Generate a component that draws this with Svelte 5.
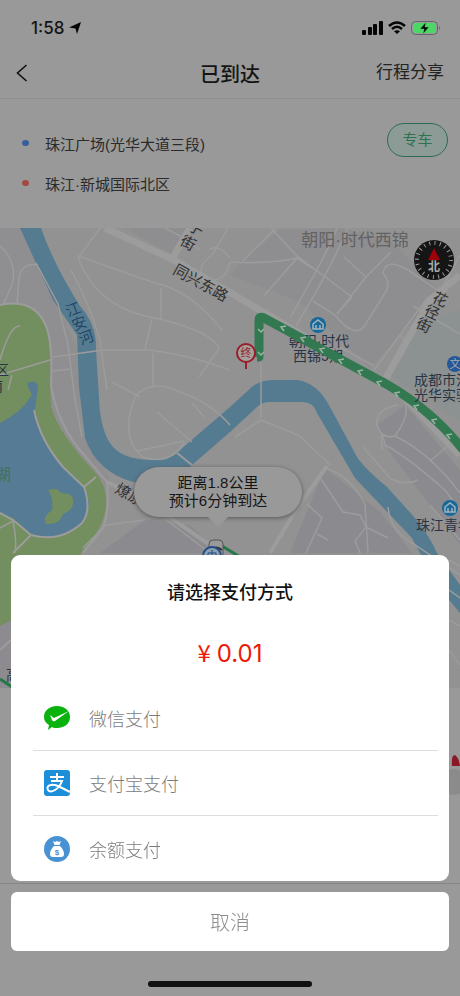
<script>
  const trip = {
    from: "珠江广场(光华大道三段)",
    to: "珠江·新城国际北区",
    type: "专车",
  };

  const methods = [
    { id: "wechat", name: "微信支付" },
    { id: "alipay", name: "支付宝支付" },
    { id: "balance", name: "余额支付" },
  ];

  const roads = [
    "M0 246Q18 262 12 285L3 305",
    "M38 265Q22 262 19 278L17 303M36 263L58 304L68 345L75 400L82 437",
    "M71 270Q88 300 100 340L107 390",
    "M100 228L78 258Q98 310 160 319Q215 333 219 349L199 377",
    "M78 256L155 283Q190 290 222 330",
    "M161 288V319M152 319L145 349M153 353V387M53 357L103 350L150 350Q190 355 230 370",
    "M53 371L70 369M112 382L140 397M157 412L192 442",
    "M185 442Q170 466 143 457Q119 439 135 397Q150 378 180 392Q210 402 230 425M192 403L204 417M137 451L184 441",
    "M165 228L180 236L200 250M228 228L212 255Q194 268 206 278Q225 285 230 262M209 250Q218 243 230 258",
    "M230 262Q273 264 297 258L264 296M243 261L276 228M271 228L297 256L352 297L337 314M297 258L320 273",
    "M337 228Q330 248 290 318M348 228Q330 270 296 326M344 257L366 277L337 314M391 252L366 277",
    "M313 301L335 315Q355 340 365 325L385 293Q392 284 383 273Q386 257 408 270L440 292L460 255M428 297L374 370",
    "M413 306L460 334M400 335L405 340M340 347L374 366",
    "M261 361V418M261 420L235 437M261 420L300 436L330 465",
    "M377 425Q375 409 398 405M377 425Q382 440 395 436Q410 415 405 405M395 436Q430 453 460 493M430 461L455 440M382 450Q380 420 385 445Q405 455 445 490L460 510M363 447L391 479Q406 486 418 480",
    "M325 468Q350 475 365 504L368 553M321 479L343 512L360 515L366 527L355 541L360 553M307 504L322 518L306 553M317 534L328 540",
    "M366 527L388 538M388 507Q390 530 412 543L460 575M430 505L460 540",
    "M83 548L106 525L145 520M160 515L210 553",
    "M0 528L13 521Q17 540 15 553M0 360Q10 325 20 326M0 375L50 360M12 375L8 390",
    "M449 560L460 566M449 590L460 598M449 620L460 626M449 650L460 665",
  ];

  let selected = $state("");
  let open = $state(true);
</script>

<div class="page">
  <div class="status">
    <div class="time">
      <span>1:58</span>
      <svg width="12" height="12" viewBox="0 0 12 12"><path d="M12 0L8 12L6.500 6.500L0 5.500z" /></svg>
    </div>
    <div class="signals">
      <svg width="21" height="14" viewBox="0 0 21 14">
        <rect x="0" y="9" width="4" height="5" rx="1" />
        <rect x="6" y="6" width="4" height="8" rx="1" />
        <rect x="11" y="3" width="4" height="11" rx="1" />
        <rect x="17" y="0" width="4" height="14" rx="1" />
      </svg>
      <svg width="18" height="14" viewBox="0 0 18 14" fill="none" stroke="#050505" stroke-width="2.500">
        <path d="M1 5Q9 -2 17 5M4 8Q9 3.500 14 8" />
        <path d="M9 13L6 10.300Q9 8.300 12 10.300z" fill="#050505" stroke="none" />
      </svg>
      <svg width="30" height="14" viewBox="0 0 30 14">
        <rect x="0.500" y="0.500" width="26" height="13" rx="4" fill="none" stroke="#666" />
        <rect x="2" y="2" width="23" height="10" rx="2.500" fill="#4bd765" />
        <path d="M28 5Q30 7 28 9z" fill="#666" />
        <path d="M15 1L9 8H13L12 13L18 6H14z" stroke="#4bd765" stroke-width=".5" />
      </svg>
    </div>
  </div>

  <header>
    <button class="back" aria-label="返回">
      <svg width="12" height="18" viewBox="0 0 12 18" fill="none" stroke="#111" stroke-width="1.600">
        <path d="M10.500 1L1.500 9L10.500 17" />
      </svg>
    </button>
    <h1>已到达</h1>
    <a href="#share">行程分享</a>
  </header>

  <section class="trip">
    <ul>
      <li><i class="dot blue"></i>{trip.from}</li>
      <li><i class="dot red"></i>{trip.to}</li>
    </ul>
    <span class="tag">{trip.type}</span>
  </section>

  <div class="map">
    <svg class="canvas" viewBox="0 228 460 460" preserveAspectRatio="xMidYMid slice">
      <rect x="-200" y="228" width="900" height="460" fill="#929293" />
      <path d="M0 228H20L58 304L77 350L82 430L110 480L100 495L50 407L50 345L30 308L0 304z" fill="#8f8e91" />
      <path d="M125 228L176 256L200 228zM230 275L300 302L330 330L370 368L440 292L390 240L340 228L280 230L240 262z" fill="#8e8d90" />
      <path d="M377 425L405 405L460 470V545L388 450zM325 468L290 553H412L380 512zM100 553L145 520L190 525L220 553z" fill="#8b8a8f" />
      <path d="M410 330L460 310V420L385 372z" fill="#8c9191" />

      <!-- park and lake -->
      <path d="M0 305Q33 298 45 325Q51 340 50 381L51 407Q60 435 93 470Q106 484 106 500Q108 523 83 550L40 626H0z" fill="#738e5f" />
      <path d="M0 423Q22 412 32 395L27 384Q34 378 38 386L35 410Q41 443 63 467Q88 485 89 503Q86 531 60 535Q40 539 30 533L13 518L0 513z" fill="#557b95" />
      <path d="M48 490Q58 487 61 493Q74 493 73 502Q74 510 63 514Q60 525 46 524Q42 517 52 510Q54 499 48 490z" fill="#738e5f" />
      <path d="M0 626L40 605V688H0z" fill="#8d8b90" />

      <!-- river -->
      <path d="M20 228H41Q53 263 80 306Q97 325 96 350L99 398Q100 428 110 443Q120 459 150 460Q172 459 180 450L230 407L253 386Q261 380 275 380H297Q318 383 330 407L357 457Q365 469 387 487L415 518Q430 537 437 553L460 585V613L445 595L420 553L412 538L355 478L317 413Q313 402 303 402H270Q262 402 257 407L230 432L192 465Q170 492 133 482Q97 472 85 438L79 387L77 335L53 300z" fill="#557b91" />

      <g class="roads">
        {#each roads as d}
          <path {d} />
        {/each}
      </g>
      <g class="wide">
        <path d="M105 228L172 259L260 310L400 393L460 455" />
        <path d="M172 259L190 228M460 275L430 300L386 378" />
        <path d="M0 305Q38 297 48 332Q53 350 51 385Q57 425 85 456L107 482Q110 510 103 528L83 553" class="thin" />
        <path d="M34 410Q40 440 63 467L84 487Q92 510 82 523Q60 543 31 535L13 520L0 513M31 535L13 553M84 487L96 477M177 453L192 465" class="thin" />
        <path d="M107 482L145 500L210 545M327 466L296 510L270 553" class="medium" />
        <path d="M0 650L11 640" class="thin" />
      </g>

      <text class="place" x="355" y="246" font-size="17" text-anchor="middle" fill="#626262">朝阳·时代西锦</text>
      <text class="label" x="319" y="346" text-anchor="middle">朝阳·时代</text>
      <text class="label" x="318" y="361" text-anchor="middle">西锦5期</text>

      <!-- route -->
      <path d="M257 357H259V320Q259 316 264 318L375 378Q428 405 465 452" class="route" />
      <path d="M258 329L261 332L264 329M258 352L261 355L264 352M286 326L281 327L284 331M306 337L301 338L304 342M325 348L320 349L323 353M344 359L339 360L342 364M363 370L358 371L361 375M382 381L377 382L380 386M400 392L395 393L398 397M419 405L414 406L417 410M437 419L432 420L435 424M452 434L447 435L450 439" class="arrows" />
      <path d="M0 679L15 689M222 546L245 560" stroke="#257848" stroke-width="3" />

      <text class="road-name" transform="translate(172 273) rotate(29)">同兴东路</text>
      <text class="road-name" transform="translate(179 244) rotate(29)">街</text>
      <text class="road-name" transform="translate(187 229) rotate(29)">子</text>
      <text class="road-name" transform="translate(114 492) rotate(29)">燎原路</text>
      <g class="river-name">
        <text transform="translate(68 317) rotate(-20)">江</text>
        <text transform="translate(74 331) rotate(-20)">安</text>
        <text transform="translate(81 345) rotate(-20)">河</text>
      </g>
      <g class="road-name">
        <text transform="translate(431 301) rotate(25)">花</text>
        <text transform="translate(423 314) rotate(25)">径</text>
        <text transform="translate(415 327) rotate(25)">街</text>
      </g>
      <text class="label" x="414" y="385">成都市江</text>
      <text class="label" x="414" y="400">光华实验</text>
      <text class="label" x="416" y="530">珠江青年</text>
      <text class="label" x="-5" y="375">区</text>
      <text class="label" x="-11" y="391">南</text>
      <text x="-5" y="480" font-size="16" fill="#467052">湖</text>
      <text class="label" x="6" y="680">高</text>

      <g class="poi">
        <circle cx="318" cy="325" r="8" />
        <path d="M313 324L318 320L323 324V329H313z" />
        <path d="M316 329V325M320 329V325" />
        <circle cx="450" cy="508" r="8" />
        <path d="M445 507L450 503L455 507V512H445z" />
        <path d="M448 512V508M452 512V508" />
        <circle cx="455" cy="364" r="8" class="school" />
        <text x="455" y="368" font-size="11" text-anchor="middle">文</text>
      </g>

      <path d="M246 361V369" stroke="#981e29" stroke-width="2" />
      <circle cx="246" cy="353" r="9" fill="#a5a0a0" stroke="#981e29" stroke-width="2" />
      <text x="246" y="357" font-size="11" text-anchor="middle" fill="#981e29">终</text>

      <!-- compass -->
      <g>
        <circle cx="434" cy="260" r="20" fill="#151515" />
        <circle cx="434" cy="260" r="17" fill="none" stroke="#999" stroke-width="4" stroke-dasharray="1 4.340" />
        <path d="M434 248L440 260H428z" fill="#a00008" />
        <text x="434" y="271" font-size="12" font-weight="700" text-anchor="middle" fill="#aaa">北</text>
      </g>

      <!-- car -->
      <rect x="209" y="540" width="14" height="26" rx="4" fill="#999" stroke="#555" />
      <path d="M211 550Q216 545 222 550" fill="none" stroke="#333" stroke-width="2" />
      <circle cx="212" cy="556" r="9" fill="#8a9eae" stroke="#1c4b86" stroke-width="2" />
      <path d="M208 553H216V556H208zM212 550V560" fill="none" stroke="#1c4b86" />
    </svg>
    <div class="bubble">
      <p>距离1.8公里</p>
      <p>预计6分钟到达</p>
    </div>
  </div>

  <section class="driver">
    <svg width="24" height="48" viewBox="0 0 24 48">
      <path d="M12 16Q11 5 15 5Q19 8 20 16z" fill="#8b1826" />
      <circle cx="14" cy="32" r="13" fill="#8b8b8b" />
    </svg>
  </section>

  {#if open}
    <div class="sheet">
      <div class="panel" role="dialog" aria-labelledby="pay-title">
        <h2 id="pay-title">请选择支付方式</h2>
        <p class="price"><span class="yen">¥</span>0.01</p>
        <div class="methods">
          {#each methods as method}
            <button class="method" class:selected={selected === method.id} onclick={() => (selected = method.id)}>
              <svg width="28" height="28" viewBox="0 0 28 28">
                {#if method.id === "wechat"}
                  <path d="M14 2C21 2 27 6 27 13C27 20 21 24 14 24C12 24 10 24 9 23L5 26L6 21C3 19 1 17 1 13C1 6 7 2 14 2z" fill="#09b20c" />
                  <path d="M7 11L11 14L26 7L12 17Q10 18 9 16z" fill="#fff" />
                {:else if method.id === "alipay"}
                  <rect x="1" y="1" width="26" height="26" rx="3" fill="#1d8fd8" />
                  <g fill="none" stroke="#fff" stroke-width="2">
                    <path d="M7 8H21M14 4V12M8 12H19Q17 18 12 21Q7 24 5 21Q3 17 8 16Q11 15 17 18L27 23" />
                  </g>
                {:else}
                  <circle cx="14" cy="14" r="13" fill="#4892d4" />
                  <path d="M10 6L12 7L14 6L16 7L18 6L16.500 10H11.500zM11 11H17Q21 15 21 19Q21 22 18 22H10Q7 22 7 19Q7 15 11 11z" fill="#fff" />
                  <text x="14" y="20" font-size="8" font-weight="700" text-anchor="middle" fill="#4892d4">$</text>
                {/if}
              </svg>
              <span>{method.name}</span>
            </button>
          {/each}
        </div>
      </div>
      <button class="cancel" onclick={() => (open = false)}>取消</button>
      <div class="home"></div>
    </div>
  {/if}
</div>

<style>
  :global(body) {
    margin: 0;
    background: #999;
  }

  .page {
    display: flex;
    flex-direction: column;
    min-height: 100vh;
    overflow: hidden;
    color: #151515;
    background: #999;
    font-family: "Liberation Sans", "Noto Sans CJK SC", sans-serif;
  }

  h1,
  h2,
  p,
  ul {
    margin: 0;
    padding: 0;
  }

  button {
    padding: 0;
    border: 0;
    background: none;
    font-family: inherit;
    cursor: pointer;
  }

  .status {
    display: flex;
    align-items: center;
    justify-content: space-between;
    height: 56px;
    padding: 0 19px 0 31px;
    fill: #050505;
  }

  .time,
  .signals {
    display: flex;
    align-items: center;
    gap: 5px;
  }

  .time {
    font-family: Inter, sans-serif;
    font-size: 17px;
    font-weight: 500;
  }

  header {
    display: grid;
    grid-template-columns: 1fr auto 1fr;
    align-items: center;
    height: 42px;
    padding: 0 16px;
    border-bottom: 1px solid #8f8f8f;
  }

  .back {
    display: flex;
    width: 24px;
    height: 24px;
    padding-bottom: 8px;
    align-items: center;
  }

  h1 {
    padding-bottom: 4px;
    font-size: 20px;
    font-weight: 500;
    line-height: 30px;
  }

  header a {
    justify-self: end;
    padding-bottom: 8px;
    color: #222;
    font-size: 17px;
    line-height: 24px;
    text-decoration: none;
  }

  .trip {
    display: flex;
    align-items: flex-start;
    justify-content: space-between;
    height: 105px;
    padding: 24px 12px 0 22px;
  }

  .trip ul {
    list-style: none;
  }

  .trip li {
    display: flex;
    align-items: center;
    gap: 16px;
    height: 40px;
    color: #2b2b2b;
    font-size: 15px;
  }

  .dot {
    width: 7px;
    height: 6px;
    border-radius: 50%;
  }

  .blue {
    background: #365f9d;
  }

  .red {
    background: #a54843;
  }

  .tag {
    box-sizing: border-box;
    width: 61px;
    height: 34px;
    border: 1px solid #2d6c50;
    border-radius: 17px;
    color: #2d7353;
    background: #8c9b95;
    font-size: 15px;
    line-height: 32px;
    text-align: center;
  }

  .map {
    position: relative;
    height: 460px;
  }

  .canvas {
    display: block;
    width: 100%;
    height: 100%;
  }

  .roads {
    fill: none;
    stroke: #9c9c9c;
    stroke-width: 1.5;
  }

  .wide {
    fill: none;
    stroke: #9c9c9c;
    stroke-width: 7;
  }

  .thin {
    stroke-width: 2;
  }

  .medium {
    stroke-width: 4;
  }

  .route {
    fill: none;
    stroke: #327951;
    stroke-width: 9;
    stroke-linejoin: round;
  }

  .arrows {
    fill: none;
    stroke: #9cb3a2;
    stroke-width: 1.5;
  }

  .label {
    fill: #2a3443;
    font-size: 14px;
  }

  .road-name {
    fill: #303030;
    font-size: 15px;
  }

  .river-name {
    fill: #234766;
    font-size: 15px;
  }

  .poi {
    fill: #17699a;
  }

  .poi path {
    fill: none;
    stroke: #a5b4bc;
    stroke-width: 1.5;
  }

  .poi .school {
    fill: #24589a;
  }

  .poi text {
    fill: #aaa;
  }

  .bubble {
    position: absolute;
    top: 239px;
    left: 50%;
    box-sizing: border-box;
    width: 168px;
    height: 50px;
    margin-left: -96px;
    padding-top: 7px;
    border-radius: 25px;
    background: #999;
    box-shadow: 0 1px 4px #555;
    font-size: 15px;
    line-height: 18px;
    text-align: center;
  }

  .bubble::after {
    position: absolute;
    top: 49px;
    left: 73px;
    border: 11px solid transparent;
    border-top-color: #999;
    border-bottom: 0;
    content: "";
  }

  .driver {
    display: flex;
    align-items: flex-start;
    justify-content: flex-end;
    box-sizing: border-box;
    height: 196px;
    padding-top: 62px;
    border-bottom: 1px solid #858585;
  }

  .driver svg {
    margin-right: -4px;
  }

  .sheet {
    position: fixed;
    right: 0;
    bottom: 0;
    left: 0;
    padding: 0 11px 9px;
  }

  .panel {
    box-sizing: border-box;
    padding: 24px 11px 0 22px;
    border-radius: 9px;
    background: #fff;
    text-align: center;
  }

  h2 {
    padding-right: 11px;
    color: #111;
    font-size: 18px;
    font-weight: 500;
    line-height: 28px;
  }

  .price {
    padding: 26px 11px 13px 0;
    color: #f01808;
    font-family: Inter, "Noto Sans CJK SC", sans-serif;
    font-size: 24px;
    line-height: 38px;
  }

  .yen {
    margin-right: 6px;
    font-family: "Noto Sans CJK SC", sans-serif;
  }

  .method {
    display: flex;
    align-items: center;
    gap: 18px;
    box-sizing: border-box;
    width: 100%;
    height: 65px;
    padding-left: 10px;
    border-bottom: 1px solid #dedede;
    color: #7c7c7c;
    font-size: 18px;
    font-weight: 300;
  }

  .method:last-child {
    border-bottom: 0;
  }

  .method.selected {
    font-weight: 400;
  }

  .cancel {
    display: block;
    width: 100%;
    height: 59px;
    margin: 11px 0 30px;
    border-radius: 6px;
    color: #8c8c8c;
    background: #fff;
    font-size: 20px;
    font-weight: 300;
  }

  .home {
    width: 164px;
    height: 6px;
    margin: 0 auto;
    border-radius: 3px;
    background: #111;
  }
</style>
